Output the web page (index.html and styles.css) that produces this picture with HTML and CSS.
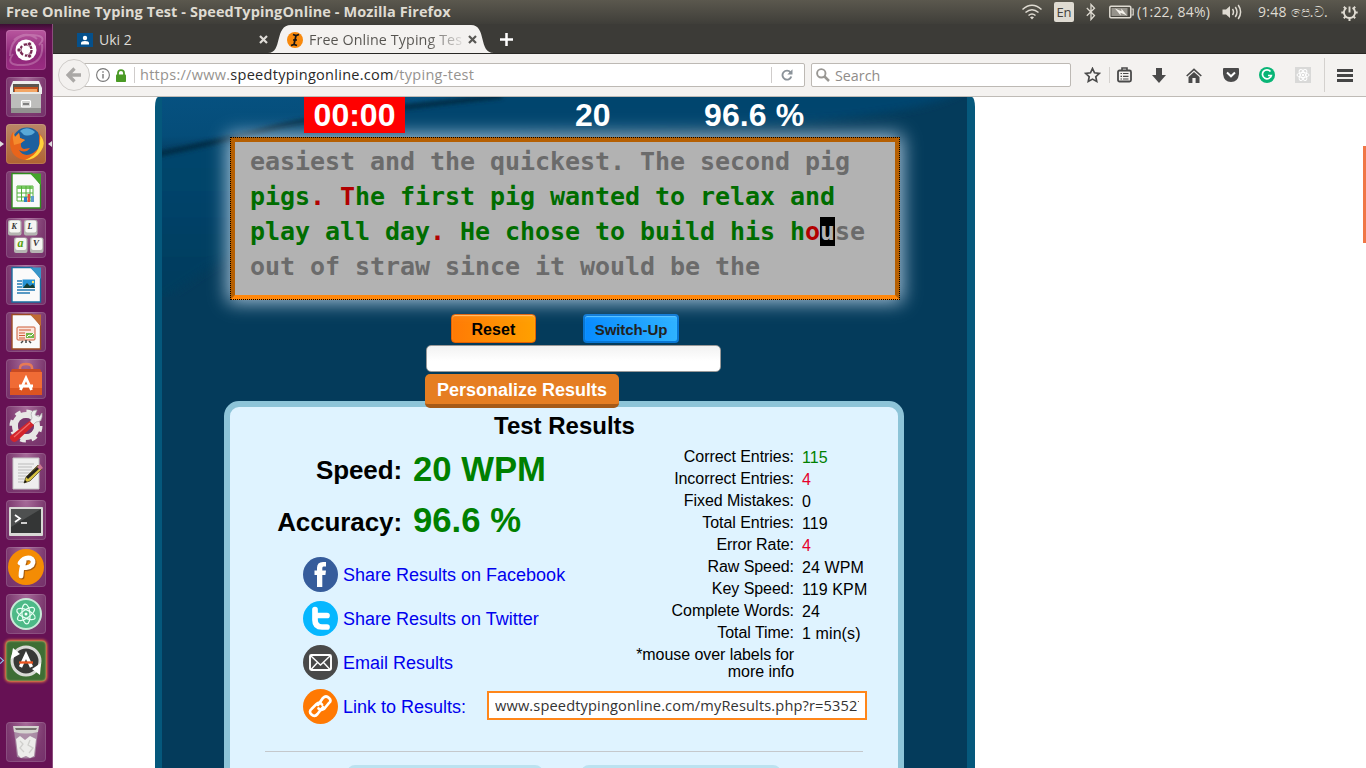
FILE: index.html
```html
<!DOCTYPE html>
<html lang="en">
<head>
<meta charset="utf-8">
<title>Free Online Typing Test - SpeedTypingOnline</title>
<link rel="stylesheet" href="styles.css">
</head>
<body>
<header class="panel">
  <span class="panel-title">Free Online Typing Test - SpeedTypingOnline - Mozilla Firefox</span>
  <div class="indicators">
    <svg class="wifi" width="20" height="16" viewBox="0 0 20 16" fill="none" stroke="#dfdbd2" stroke-width="1.5"><path d="M.5 5.5Q10-3 19.500 5.500M3.500 8.500Q10 3 16.500 8.500M6.500 11.500Q10 8.500 13.500 11.500"/><path d="M8 13.200Q10 11.800 12 13.200L10 15.400Z" fill="#dfdbd2" stroke="none"/></svg>
    <span class="lang">En</span>
    <svg class="bt" width="10" height="18" viewBox="0 0 10 18" fill="none" stroke="#dfdbd2" stroke-width="1.300"><path d="M.8 5L8.500 12.500L5 16.500V1.500L8.500 5.200L.8 12.700"/></svg>
    <svg class="batt" width="25" height="14" viewBox="0 0 25 14"><rect x=".8" y="1.300" width="21" height="11.400" rx="1.200" fill="none" stroke="#dfdbd2" stroke-width="1.500"/><path d="M22.500 4h1.700v6h-1.700" fill="none" stroke="#dfdbd2" stroke-width="1.200"/><rect x="2.500" y="3" width="16" height="8" fill="#96938b"/><path d="M6 3.500L12.500 6.200L12.300 3.500L18 10.500L11.500 7.800L11.700 10.500Z" fill="#f4f1ea"/></svg>
    <span class="batt-text">(1:22, 84%)</span>
    <svg class="vol" width="21" height="16" viewBox="0 0 21 16" fill="none" stroke="#dfdbd2" stroke-width="1.500"><path d="M.5 5.500H4L8 2V14L4 10.500H.5Z" fill="#dfdbd2" stroke="none"/><path d="M10.500 5Q12.500 8 10.500 11M13.300 3Q16.700 8 13.300 13M16.200 1Q21 8 16.200 15"/></svg>
    <span class="clock">9:48 <span class="ampm">පෙ.ව.</span></span>
    <svg class="power" width="17" height="17" viewBox="0 0 17 17" fill="none" stroke="#dfdbd2"><path d="M5.400 3.800A5.600 5.600 0 1 0 11.600 3.800M8.500 2.500V8.500" stroke-width="1.900"/><path d="M.3 8.500H3M14 8.500H16.700M2.800 2.800L4.600 4.600M14.200 2.800L12.400 4.600M2.800 14.200L4.600 12.400M14.200 14.200L12.400 12.400M8.500 14V17" stroke-width="2"/></svg>
  </div>
</header>
<div class="desktop">
  <nav class="launcher">
    <div class="tile dash"><svg viewBox="0 0 40 40"><g fill="none" stroke="#e3b5d4" stroke-opacity=".35" stroke-width="2"><path d="M4 26Q5 5 24 5T33 15M36 14Q38 34 18 35T7 24M8 10Q20 0 31 9"/></g><circle cx="20" cy="20" r="10.500" fill="#fff"/><circle cx="20" cy="20" r="5.600" fill="none" stroke="#772953" stroke-width="2.300" stroke-dasharray="9.700 2"/><g fill="#772953" stroke="#fff" stroke-width=".7"><circle cx="13" cy="20" r="2.100"/><circle cx="23.500" cy="14" r="2.100"/><circle cx="23.500" cy="26" r="2.100"/></g></svg></div>
    <div class="tile"><svg viewBox="0 0 40 40"><path d="M7 4H33L36 11V17H4V11Z" fill="#eee"/><path d="M7 7H33V18H7Z" fill="#5b5650"/><path d="M8 10H32V18H8Z" fill="#c1501c"/><path d="M9 12H31V18H9Z" fill="#f2a665"/><path d="M5 15H35V35H5Z" fill="#bdbdbb"/><path d="M5 15H35V17H5Z" fill="#e8e8e6"/><path d="M5 31H35V36H5Z" fill="#929290"/><rect x="15.500" y="23.500" width="9" height="6.500" rx="1" fill="#d4d4d2" stroke="#fff" stroke-width="1.200"/><path d="M17 27H23" stroke="#666" stroke-width="1.500"/></svg></div>
    <div class="tile fox"><i class="arrow-l"></i><i class="arrow-r"></i><svg viewBox="0 0 40 40"><circle cx="21" cy="18.500" r="15" fill="#1c609f"/><path d="M14 7Q21 1 29 8Q25 13 18 11Z" fill="#58a8d8"/><path d="M32 8Q40 15 36 25Q31 37 19 36Q5 34 4 20Q4 12 7 8L9 13L13 9L14 14L19 16L15 19Q14 24 18 25L24 24Q20 30 13 26Q18 34 27 29Q35 24 33 17Q34 12 32 8Z" fill="#e8641b"/><path d="M34 11Q41 19 35 27Q29 36 19 36Q29 32 32 25Q35 18 34 11Z" fill="#ffd33b"/><path d="M7 8L9 13L13 9L14 14L19 16L15 19L8 21Q6 14 7 8Z" fill="#f58b2c"/></svg></div>
    <div class="tile"><svg viewBox="0 0 40 40"><path d="M6 2.500H26L34.500 13V37H6Z" fill="#fafafa" stroke="#2f8e1e" stroke-width="1.400"/><path d="M24 2.500H35V14Z" fill="#43a32b"/><path d="M11 15H27V30H11Z" fill="#fff" stroke="#52af3b"/><path d="M11 15H27V18H11Z" fill="#78c961"/><path d="M11 22H27M11 26H27M15.500 15V30M20 15V30M24 15V30" stroke="#52af3b"/><path d="M18 26H21V31H18Z" fill="#2c83c5"/><path d="M21.500 23H24V31H21.500Z" fill="#e5533d"/><path d="M25 25H28V31H25Z" fill="#5e9ccb"/></svg></div>
    <div class="tile"><svg viewBox="0 0 40 40" class="keys"><g fill="#b5b5b2"><rect x="2" y="2" width="13.500" height="15.500" rx="2"/><rect x="18" y="2" width="13.500" height="15.500" rx="2"/><rect x="8" y="19.500" width="13.500" height="15.500" rx="2"/><rect x="24" y="19.500" width="13.500" height="15.500" rx="2"/></g><g fill="#f5f5f2"><rect x="3.300" y="2.500" width="11" height="12" rx="2"/><rect x="19.300" y="2.500" width="11" height="12" rx="2"/><rect x="9.300" y="20" width="11" height="12" rx="2"/><rect x="25.300" y="20" width="11" height="12" rx="2"/></g><text x="5.500" y="10.500" font-size="8">K</text><text x="21.500" y="10.500" font-size="8">L</text><text class="key-a" x="11.500" y="28.500" font-size="12">a</text><text x="27" y="28" font-size="9">V</text></svg></div>
    <div class="tile"><svg viewBox="0 0 40 40"><path d="M6 2.500H26L34.500 13V37H6Z" fill="#fafafa" stroke="#176d9f" stroke-width="1.400"/><path d="M24 2.500H35V14Z" fill="#3795c9"/><path d="M11 16H16M11 19H16M11 22H16M11 25H29M11 28H24" stroke="#2379b2" stroke-width="1.500"/><path d="M16.500 14.500H29V23H16.500Z" fill="#2793d5"/><path d="M17 23L21 18L24 21L27 19L29 23Z" fill="#163f36"/><circle cx="27" cy="17" r="1.200" fill="#ffe86a"/></svg></div>
    <div class="tile"><svg viewBox="0 0 40 40"><path d="M6 2.500H26L34.500 13V37H6Z" fill="#fafafa" stroke="#9c4a21" stroke-width="1.400"/><path d="M24 2.500H35V14Z" fill="#c06b35"/><rect x="11" y="15" width="18" height="13" rx="1" fill="#fbe5dc" stroke="#cd5c36"/><path d="M13 18H25M13 21H19M13 23.500H19M13 26H19" stroke="#cf5b35" stroke-width="1.200"/><path d="M20 21H28V26H20Z" fill="#72b64a"/><path d="M21 25L23 23L25 24L28 21" fill="none" stroke="#fff"/><path d="M17 29L15 31M20 28V31M23 29L25 31" stroke="#444" stroke-width="1.500"/></svg></div>
    <div class="tile"><svg viewBox="0 0 40 40"><path d="M14 15V9Q14 5 20 5T26 9V15" fill="none" stroke="#e77a55" stroke-width="2.500"/><path d="M6 10H34L36 14H4Z" fill="#c94b22"/><path d="M4 13H36V36H4Z" fill="#f06b35"/><path d="M4 29H36V36H4Z" fill="#dc5421"/><path d="M14.500 31L20 19L25.500 31M13 27H27" fill="none" stroke="#fff" stroke-width="2.800"/></svg></div>
    <div class="tile"><svg viewBox="0 0 40 40"><circle cx="20" cy="20" r="11" fill="none" stroke="#e7e7e5" stroke-width="6"/><circle cx="20" cy="20" r="14.500" fill="none" stroke="#e7e7e5" stroke-width="4" stroke-dasharray="5.600 5.790"/><circle cx="20" cy="20" r="8" fill="#77366a"/><path d="M24 16L26 12Q23 4 31 4L29 9L33 11L36 7Q37 16 30 16L26 20Z" fill="#eee" stroke="#aaa" stroke-width=".7"/><path d="M23.500 15L28 19L12 34Q8 38 5 34T7 28Z" fill="#d3242b"/><path d="M24 17L8 31" stroke="#f06b67" stroke-width="1.300"/></svg></div>
    <div class="tile"><svg viewBox="0 0 40 40"><path d="M7 5H33V36H7Z" fill="#eee" stroke="#c4c4c4"/><path d="M12 11H28M12 14H26M12 17H29M12 20H27M12 23H21M12 26H20M12 29H20" stroke="#bbb"/><path d="M18 30L20 24L32 12L36 16L24 28Z" fill="#d7c23f" stroke="#47401f" stroke-width=".7"/><path d="M20 24L32 13L34 15L22 26Z" fill="#25231d"/><path d="M31 14L34 11L37 15L34 17Z" fill="#ce7892"/><path d="M18 30L19 27L21 29Z" fill="#111"/></svg></div>
    <div class="tile"><svg viewBox="0 0 40 40"><rect x="3" y="7" width="34" height="29" rx="1" fill="#d9d9d6"/><rect x="5" y="9" width="30" height="24" fill="#343636"/><path d="M5 9H35L5 27Z" fill="#4e5050"/><path d="M9 15L14 18.500L9 22M15 23H21" fill="none" stroke="#fff" stroke-width="1.700"/></svg></div>
    <div class="tile"><svg viewBox="0 0 40 40"><circle cx="20" cy="20" r="18" fill="#f48c04"/><path d="M15 29Q15 21 18 15M14 16Q18 10 24 11Q29 13 26 18Q22 22 17 20" fill="none" stroke="#a85e10" stroke-width="5" stroke-linecap="round" transform="translate(1 1)"/><path d="M15 29Q15 21 18 15M14 16Q18 10 24 11Q29 13 26 18Q22 22 17 20" fill="none" stroke="#fff" stroke-width="4.800" stroke-linecap="round"/></svg></div>
    <div class="tile"><svg viewBox="0 0 40 40"><circle cx="20" cy="20" r="15" fill="#4db987" stroke="#c8ead8" stroke-width="2"/><g fill="none" stroke="#e7fff4" stroke-width="1.200"><ellipse cx="20" cy="20" rx="10" ry="4" transform="rotate(25 20 20)"/><ellipse cx="20" cy="20" rx="10" ry="4" transform="rotate(85 20 20)"/><ellipse cx="20" cy="20" rx="10" ry="4" transform="rotate(145 20 20)"/></g><circle cx="20" cy="20" r="1.500" fill="#fff"/></svg></div>
    <div class="tile updater"><i class="arrow-open"></i><svg viewBox="0 0 40 40"><circle cx="20" cy="20" r="14" fill="#373836" stroke="#d9dad6" stroke-width="3"/><path d="M5 18L7 7L14 13ZM35 22L34 34L26 28Z" fill="#fff"/><path d="M14.500 26L20 14L25.500 26" fill="none" stroke="#fff" stroke-width="3.400"/><path d="M13 21.500H27" stroke="#e95420" stroke-width="2.300"/></svg></div>
    <div class="tile trash"><svg viewBox="0 0 40 40"><path d="M8 8H32L29 35Q20 38 11 35Z" fill="#b9aeb8" fill-opacity=".65"/><path d="M10 17L14 14L19 18L24 14L30 17L28 34L24 36L20 34L15 36L12 33Z" fill="#ececea"/><path d="M14 19L17 22L14 26L18 30M24 18L22 23L27 26L23 31" fill="none" stroke="#cfcfcc" stroke-width="1.300"/><path d="M7 4H33L32 10Q20 13 8 10Z" fill="#d5d4d0"/><path d="M9 6H31L30 8H10Z" fill="#77716f"/></svg></div>
  </nav>
  <main class="browser">
    <div class="tabs">
      <div class="tab-idle"><svg width="16" height="14" viewBox="0 0 16 14"><path d="M0 0H16V14H0Z" fill="#05508b"/><circle cx="8" cy="5" r="2.200" fill="#fff"/><path d="M4 11.500V10Q4 8 8 8T12 10V11.500Z" fill="#fff"/></svg><span>Uki 2</span><svg class="x" width="9" height="9" viewBox="0 0 9 9"><path d="M1 1L8 8M8 1L1 8" stroke="#dfdcd7" stroke-width="2.200"/></svg></div>
      <div class="tab-active"><svg class="tab-shape" width="226" height="29" viewBox="0 0 226 29"><path d="M0 29C15 29 6 1 23 1H203C219 1 210 29 226 29Z" fill="#f4f2f0"/></svg><svg class="fav" width="16" height="16" viewBox="0 0 16 16"><circle cx="8" cy="8" r="8" fill="#f8890c"/><path d="M6 2.500L9 3.500L12 2.500M9 3.500L7 12.500M4 13.500L7 12.500L10 13.500M6 8H10" fill="none" stroke="#151515" stroke-width="1.700"/></svg><span class="tab-label">Free Online Typing Tes</span><svg class="x2" width="9" height="9" viewBox="0 0 9 9"><path d="M1 1L8 8M8 1L1 8" stroke="#595854" stroke-width="2.200"/></svg></div>
      <svg class="plus" width="13" height="13" viewBox="0 0 13 13"><path d="M6.500 0V13M0 6.500H13" stroke="#fff" stroke-width="2.500"/></svg>
    </div>
    <div class="toolbar">
      <span class="back"><svg width="16" height="16" viewBox="0 0 16 16"><path d="M8.500 1.500L2 8L8.500 14.500M2.500 8H15" fill="none" stroke="#aaa8a6" stroke-width="3.300"/></svg></span>
      <div class="url">
        <svg class="info" width="14" height="14" viewBox="0 0 14 14"><circle cx="7" cy="7" r="6.400" fill="none" stroke="#777" stroke-width="1.100"/><path d="M7 6V10.500M7 3.300V4.800" stroke="#777" stroke-width="1.400"/></svg>
        <svg class="lock" width="10" height="13" viewBox="0 0 10 13"><path d="M2 6V4Q2 1.200 5 1.200T8 4V6" fill="none" stroke="#4a9a25" stroke-width="1.800"/><rect y="5.500" width="10" height="7.500" rx=".8" fill="#4a9a25"/></svg>
        <span class="url-text">https://www.<b>speedtypingonline.com</b>/typing-test</span>
        <svg class="reload" width="12" height="12" viewBox="0 0 12 12"><path d="M9.500 3.300A4.500 4.500 0 1 0 10.300 7.500" fill="none" stroke="#8a9299" stroke-width="1.900"/><path d="M11.500 .3V5.500H6.300Z" fill="#8a9299"/></svg>
      </div>
      <div class="search"><svg width="14" height="14" viewBox="0 0 14 14"><circle cx="5.300" cy="5.300" r="4.200" fill="none" stroke="#999793" stroke-width="1.900"/><path d="M8.500 8.500L13 13" stroke="#999793" stroke-width="2.500"/></svg><span>Search</span></div>
      <div class="tools">
        <svg width="17" height="16" viewBox="0 0 17 16"><path d="M8.500 1.500L10.500 5.800L15.300 6.400L11.800 9.700L12.700 14.400L8.500 12.100L4.300 14.400L5.200 9.700L1.700 6.400L6.500 5.800Z" fill="none" stroke="#4a4a4a" stroke-width="1.700"/></svg>
        <i class="sep short"></i>
        <svg width="15" height="16" viewBox="0 0 15 16"><path d="M5 3V1H10V3" fill="none" stroke="#4a4a4a" stroke-width="1.600"/><rect x="1" y="3.500" width="13" height="11" rx="1.500" fill="none" stroke="#4a4a4a" stroke-width="1.800"/><path d="M3.500 6.500H5M6 6.500H11.500M3.500 9.300H5M6 9.300H11.500M3.500 12H5M6 12H11.500" stroke="#4a4a4a" stroke-width="1.200"/></svg>
        <svg width="14" height="15" viewBox="0 0 14 15"><path d="M4 0H10V7H14L7 15L0 7H4Z" fill="#4a4a4a"/></svg>
        <svg width="16" height="15" viewBox="0 0 16 15"><path d="M.7 8L8 1.300L15.300 8" fill="none" stroke="#4a4a4a" stroke-width="1.600"/><path d="M2.500 9L8 4L13.500 9V15H9.600V10H6.400V15H2.500Z" fill="#4a4a4a"/></svg>
        <svg width="16" height="14" viewBox="0 0 16 14"><path d="M1 0H15Q16 0 16 1V6Q15 14 8 14T0 6V1Q0 0 1 0Z" fill="#4a4a4a"/><path d="M4 4.500L8 8.300L12 4.500" fill="none" stroke="#fff" stroke-width="2"/></svg>
        <svg width="16" height="16" viewBox="0 0 16 16"><circle cx="8" cy="8" r="8" fill="#09b576"/><path d="M11.500 4.500A4.500 4.500 0 1 0 12.300 8.500H9" fill="none" stroke="#fff" stroke-width="1.700"/></svg>
        <svg width="16" height="16" viewBox="0 0 16 16"><path d="M0 0H16V16H0Z" fill="#d9d9d8"/><g fill="none" stroke="#fff"><ellipse cx="8" cy="8" rx="6" ry="2.500"/><ellipse cx="8" cy="8" rx="6" ry="2.500" transform="rotate(60 8 8)"/><ellipse cx="8" cy="8" rx="6" ry="2.500" transform="rotate(120 8 8)"/></g><circle cx="8" cy="8" r="1.200" fill="#fff"/></svg>
        <i class="sep tall"></i>
        <svg width="16" height="13" viewBox="0 0 16 13"><path d="M0 1.500H16M0 6.500H16M0 11.500H16" stroke="#454545" stroke-width="3"/></svg>
      </div>
    </div>
    <div class="page">
      <i class="scroll-thumb"></i>
      <div class="site">
        <svg class="swoosh" width="804" height="200" viewBox="0 0 804 200"><defs><linearGradient id="wave" x1="0" y1="0" x2=".12" y2="1"><stop offset="0" stop-color="#065180"/><stop offset=".7" stop-color="#054d79"/><stop offset="1" stop-color="#043f64"/></linearGradient><linearGradient id="deep" x1="0" y1="0" x2="0" y2="1"><stop offset="0" stop-color="#04456f"/><stop offset=".45" stop-color="#04446b"/><stop offset="1" stop-color="#043b5b"/></linearGradient><filter id="soft"><feGaussianBlur stdDeviation="4"/></filter><filter id="edge"><feGaussianBlur stdDeviation="2"/></filter></defs><path d="M-10 -10H804Q760 30 400 35Q220 45 -10 210Z" fill="url(#deep)" filter="url(#soft)"/><path d="M0 0H330Q180 18 90 36Q50 46 0 55Z" fill="url(#wave)"/><path d="M-8 58Q60 44 110 31T340 -1" fill="none" stroke="#052c43" stroke-width="5" filter="url(#edge)"/></svg>
        <div class="stats"><span class="timer">00:00</span><span class="wpm">20</span><span class="accuracy">96.6 %</span></div>
        <div class="typing">
          <div>easiest and the quickest. The second pig</div>
          <div class="ok">pigs<em>.</em> <em>T</em>he first pig wanted to relax and</div>
          <div class="ok">play all day<em>.</em> He chose to build his h<em>o</em><mark>u</mark><span class="todo">se</span></div>
          <div>out of straw since it would be the</div>
        </div>
        <div class="buttons"><span class="btn reset">Reset</span><span class="btn switch">Switch-Up</span></div>
        <div class="name-input"></div>
        <div class="personalize">Personalize Results</div>
        <section class="results">
          <h2>Test Results</h2>
          <div class="columns">
            <div class="left">
              <div class="big"><span>Speed:</span><strong>20 WPM</strong></div>
              <div class="big second"><span>Accuracy:</span><strong>96.6 %</strong></div>
              <div class="share first"><svg width="35" height="35" viewBox="0 0 35 35"><circle cx="17.500" cy="17.500" r="17.500" fill="#365c9b"/><path d="M14 30V18H11.500V13.500H14V11Q14 5 20 5H23V9.500H20.500Q19.300 9.500 19.300 11V13.500H23L22.400 18H19.300V30Z" fill="#fff"/></svg><a>Share Results on Facebook</a></div>
              <div class="share"><svg width="35" height="35" viewBox="0 0 35 35"><circle cx="17.500" cy="17.500" r="17.500" fill="#06b7ff"/><path d="M12 8.500V19Q12 26 19 26H24M12 14.500H24" fill="none" stroke="#fff" stroke-width="5.700" stroke-linecap="round"/></svg><a>Share Results on Twitter</a></div>
              <div class="share"><svg width="35" height="35" viewBox="0 0 35 35"><circle cx="17.500" cy="17.500" r="17.500" fill="#494949"/><rect x="7" y="10" width="21" height="15" rx="1.500" fill="none" stroke="#fff" stroke-width="1.900"/><path d="M8 11L17.500 20L27 11M8 24.500L14.500 17.500M27 24.500L20.500 17.500" fill="none" stroke="#fff" stroke-width="1.400"/></svg><a>Email Results</a></div>
              <div class="share"><svg width="35" height="35" viewBox="0 0 35 35"><circle cx="17.500" cy="17.500" r="17.500" fill="#ff7903"/><g fill="none" stroke="#fff" stroke-width="2.700" stroke-linecap="round"><path d="M15 16L20 9Q23 6 26 9T26 14L21 20Q18 22 15.500 19.500"/><path d="M20 18L14.500 25Q11.500 28.500 8.500 25.500T8.500 20L13.500 15Q16.500 12.500 19 15.500"/></g></svg><a>Link to Results:</a><span class="link-box"><span>www.speedtypingonline.com/myResults.php?r=53527</span></span></div>
            </div>
            <dl class="details">
              <dt>Correct Entries:</dt><dd class="good">115</dd>
              <dt>Incorrect Entries:</dt><dd class="bad">4</dd>
              <dt>Fixed Mistakes:</dt><dd>0</dd>
              <dt>Total Entries:</dt><dd>119</dd>
              <dt>Error Rate:</dt><dd class="bad">4</dd>
              <dt>Raw Speed:</dt><dd>24 WPM</dd>
              <dt>Key Speed:</dt><dd>119 KPM</dd>
              <dt>Complete Words:</dt><dd>24</dd>
              <dt>Total Time:</dt><dd>1 min(s)</dd>
              <dt class="hint">*mouse over labels for<br>more info</dt><dd></dd>
            </dl>
          </div>
          <hr>
          <div class="pills"><i class="pill-a"></i><i class="pill-b"></i></div>
        </section>
      </div>
    </div>
  </main>
</div>
</body>
</html>
```
FILE: styles.css
```css
* { box-sizing: border-box; }
html, body { height: 100%; }
body { margin: 0; height: 768px; overflow: hidden; display: flex; flex-direction: column; font-family: "Liberation Sans", Arial, sans-serif; }
svg { display: block; flex: none; }

.panel { height: 24px; flex: none; display: flex; align-items: center; justify-content: space-between; padding: 0 8px 0 6px; background: linear-gradient(#5b584e, #3f3e39); color: #dfdbd2; font: 14px/24px "Open Sans", "Noto Sans", sans-serif; white-space: nowrap; }
.panel-title { font-weight: 700; font-size: 14.500px; letter-spacing: .09px; }
.indicators { display: flex; align-items: center; height: 24px; }
.wifi { margin-right: 12px; }
.lang { width: 20px; height: 20px; margin-right: 12px; border-radius: 2px; background: #dfdbd2; color: #45433e; text-align: center; font-size: 13px; line-height: 20px; }
.bt { margin-right: 13px; }
.batt { margin-right: 3px; }
.batt-text { width: 73px; margin-right: 12px; letter-spacing: .2px; }
.vol { margin-right: 15px; }
.clock { width: 71px; margin-right: 12px; letter-spacing: .25px; }
.ampm { font-size: 14px; }

.desktop { flex: 1; display: flex; min-height: 0; }
.launcher { width: 53px; flex: none; padding: 6px 0 0 6px; display: flex; flex-direction: column; gap: 7px; background: linear-gradient(#3c0d33, #661154 7px); border-right: 1px solid #8b4c7c; }
.tile { position: relative; width: 40px; height: 40px; flex: none; border-radius: 4px; background: radial-gradient(ellipse at 50% 0, #a66b99, #7d3a70 65%, #74306a); box-shadow: inset 0 0 0 1px rgba(255,255,255,.13); }
.tile svg { width: 40px; height: 40px; }
.dash { background: linear-gradient(#b9579f, #8d2778 60%, #9b2c82); }
.fox { background: linear-gradient(#ba8667, #b06332); }
.updater { background: #3e6e34; box-shadow: 0 0 3px 1px #ff9340, inset 0 0 2px #ffc482; }
.trash { margin-top: 34px; }
.keys { font: italic 700 8px "Liberation Serif", serif; fill: #333; }
.key-a { fill: #579f10; }
.arrow-l, .arrow-r, .arrow-open { position: absolute; top: 17px; width: 0; height: 0; border: 3px solid transparent; }
.arrow-l { left: -6px; border-left: 4px solid #ddd; }
.arrow-r { right: -6px; border-right: 4px solid #ddd; }
.arrow-open { left: -8px; width: 5px; height: 5px; border: 0; border-top: 1px solid #8fc9f0; border-right: 1px solid #8fc9f0; transform: rotate(45deg); }

.browser { flex: 1; display: flex; flex-direction: column; min-width: 0; font-family: "Open Sans", "Noto Sans", sans-serif; }
.tabs { height: 30px; flex: none; display: flex; align-items: center; background: #3c3b37; border-bottom: 1px solid #292825; }
.tab-idle { width: 215px; padding-left: 24px; display: flex; align-items: center; color: #dfdcd7; font-size: 14px; margin-top: 2px; }
.tab-idle span { margin-left: 6px; flex: 1; }
.tab-active { position: relative; width: 226px; height: 29px; padding: 2px 0 0 19px; display: flex; align-items: center; align-self: flex-end; }
.tab-shape { position: absolute; left: 0; top: 0; }
.fav { position: relative; }
.tab-label { position: relative; margin-left: 6px; width: 153px; white-space: nowrap; overflow: hidden; font-size: 14.300px; letter-spacing: .1px; color: transparent; background: linear-gradient(90deg, #55534f 118px, #dcdad8 153px); background-clip: text; -webkit-background-clip: text; }
.x2 { position: relative; margin-left: 6px; }
.plus { margin-left: 6px; margin-top: 2px; }

.toolbar { height: 43px; flex: none; display: flex; align-items: center; background: #f4f2f0; border-bottom: 1px solid #bfbbb6; padding-left: 5px; }
.back { position: relative; z-index: 1; width: 32px; height: 32px; flex: none; border: 1px solid #cfccc9; border-radius: 50%; background: #f3f1ef; display: grid; place-items: center; }
.url { width: 727px; height: 24px; margin-left: -12px; flex: none; background: #fff; border: 1px solid #bdb9b4; border-radius: 2px; display: flex; align-items: center; padding-left: 17px; }
.info { margin-right: 6px; }
.url-text { margin-left: 8px; width: 638px; height: 16px; border: 1px solid #cfcccb; border-width: 0 1px; padding-left: 5px; font-size: 14.500px; line-height: 15px; color: #96938f; letter-spacing: .28px; white-space: nowrap; }
.url-text b { font-weight: 400; color: #292929; }
.reload { margin-left: 9px; }
.search { width: 260px; height: 24px; margin-left: 6px; flex: none; background: #fff; border: 1px solid #bdb9b4; border-radius: 2px; display: flex; align-items: center; gap: 5px; padding-left: 4px; color: #8f8c89; font-size: 14.300px; }
.tools { flex: 1; margin: 0 13px 0 13px; display: flex; align-items: center; justify-content: space-between; }
.sep { background: #d4d1ce; width: 1px; }
.short { height: 16px; margin: 0 -14px 0 -12px; }
.tall { height: 34px; margin: 0 -8px; }

.page { position: relative; flex: 1; min-height: 0; overflow: hidden; background: #fff; padding-left: 102px; font-family: "Liberation Sans", Arial, sans-serif; }
.scroll-thumb { position: absolute; right: 0; top: 49px; width: 3px; height: 97px; background: #f07746; }
.site { position: relative; width: 820px; height: 690px; border: solid #05587c; border-width: 0 8px 0 7px; border-radius: 3px 3px 0 0 / 10px 10px 0 0; background: #043b5b; overflow: hidden; display: flex; flex-direction: column; }
.swoosh { position: absolute; left: 0; top: 0; }
.stats { position: relative; z-index: 1; height: 40px; flex: none; display: flex; padding-left: 142px; color: #fff; font-weight: 700; font-size: 32px; line-height: 36px; }
.timer { width: 101px; height: 36px; background: #f00; text-align: center; }
.wpm { width: 36px; margin-left: 170px; }
.accuracy { margin-left: 93px; white-space: nowrap; letter-spacing: .1px; }
.typing { position: relative; width: 670px; height: 163px; flex: none; margin-left: 68px; padding: 2px 0 0 15px; border: 5px solid #b55f02; border-bottom-color: #ff870b; outline: 1px dotted #000; outline-offset: -1px; background: #b2b2b2; box-shadow: 0 0 18px 2px rgba(220,237,255,.8); color: #6b6b6b; font: 700 25px/35px "DejaVu Sans Mono", monospace; letter-spacing: -.05px; white-space: nowrap; }
.ok { color: #006d00; }
.typing em { font-style: normal; color: #b20000; }
.typing mark { background: #000; color: #b2b2b2; }
.todo { color: #6b6b6b; }
.buttons { display: flex; flex: none; height: 45px; padding: 15px 0 0 289px; }
.btn { height: 29px; margin-top: -1px; border-radius: 4px; text-align: center; font-weight: 700; }
.reset { width: 85px; background: linear-gradient(90deg, #ff7a05, #ffa000); border: 1px solid #e46000; box-shadow: inset 0 1px 1px #ffc06b; font-size: 16px; line-height: 29px; letter-spacing: .1px; }
.switch { width: 96px; margin-left: 47px; background: linear-gradient(90deg, #078bff, #2eb2ff); border: 2px solid #0876d4; box-shadow: inset 0 1px 1px #5bc5ff; color: #222; font-size: 15px; line-height: 27px; letter-spacing: -.1px; }
.name-input { width: 295px; height: 27px; flex: none; margin-left: 264px; background: linear-gradient(#f2f2f2, #fff 60%); border: 1px solid #999; border-radius: 5px; }
.personalize { position: relative; z-index: 1; width: 194px; height: 34px; flex: none; margin: 2px 0 0 263px; border-radius: 5px; background: #e67e22; border-bottom: 4px solid #a65a17; color: #fff; font-weight: 700; font-size: 18px; line-height: 32px; text-align: center; }
.results { width: 680px; height: 400px; flex: none; margin: -7px 0 0 62px; border: 6px solid #8dc4d8; border-radius: 15px 15px 0 0; background: #dff3ff; }
.results h2 { margin: 0; padding-left: 264px; font-size: 24px; line-height: 38px; height: 39px; }
.columns { display: flex; height: 305px; }
.left { width: 395px; flex: none; }
.big { height: 51px; display: flex; gap: 11px; font-weight: 700; align-items: flex-start; white-space: nowrap; line-height: 46px; }
.big span { width: 172px; text-align: right; font-size: 26px; line-height: 48px; letter-spacing: -.1px; }
.big strong { color: #008000; font-size: 34.700px; }
.second span { line-height: 50px; }
.share { height: 35px; display: flex; align-items: center; padding-left: 73px; margin-bottom: 9px; font-size: 18px; white-space: nowrap; }
.first { margin-top: 9px; }
.share a { color: #0000ee; margin-left: 5px; width: 144px; flex: none; padding-top: 2px; }
.link-box { width: 380px; height: 29px; flex: none; margin-bottom: 2px; z-index: 1; border: 2px solid #ff861a; background: #fff; padding: 0 6px; font: 14.600px/25px "Open Sans", "Noto Sans", sans-serif; color: #333; }
.link-box span { display: block; overflow: hidden; letter-spacing: .14px; }
.details { margin: 0; padding-top: 1px; display: grid; align-content: start; grid-template-columns: 169px 90px; grid-auto-rows: 22px; column-gap: 8px; font-size: 16px; line-height: 20px; white-space: nowrap; }
.details dt { text-align: right; letter-spacing: -.06px; }
.details dd { margin: 1px 0 0; letter-spacing: .1px; }
.good { color: #008000; }
.bad { color: #e6002b; }
.details .hint { line-height: 17px; padding-top: 1px; }
.results hr { width: 598px; height: 1px; margin: 0 0 0 35px; border: 0; background: #c4c8cc; }
.pills { display: flex; padding: 13px 0 0 117px; gap: 38px; }
.pills i { height: 30px; background: #bce2f0; border-radius: 8px; }
.pill-a { width: 196px; }
.pill-b { width: 200px; }
```
